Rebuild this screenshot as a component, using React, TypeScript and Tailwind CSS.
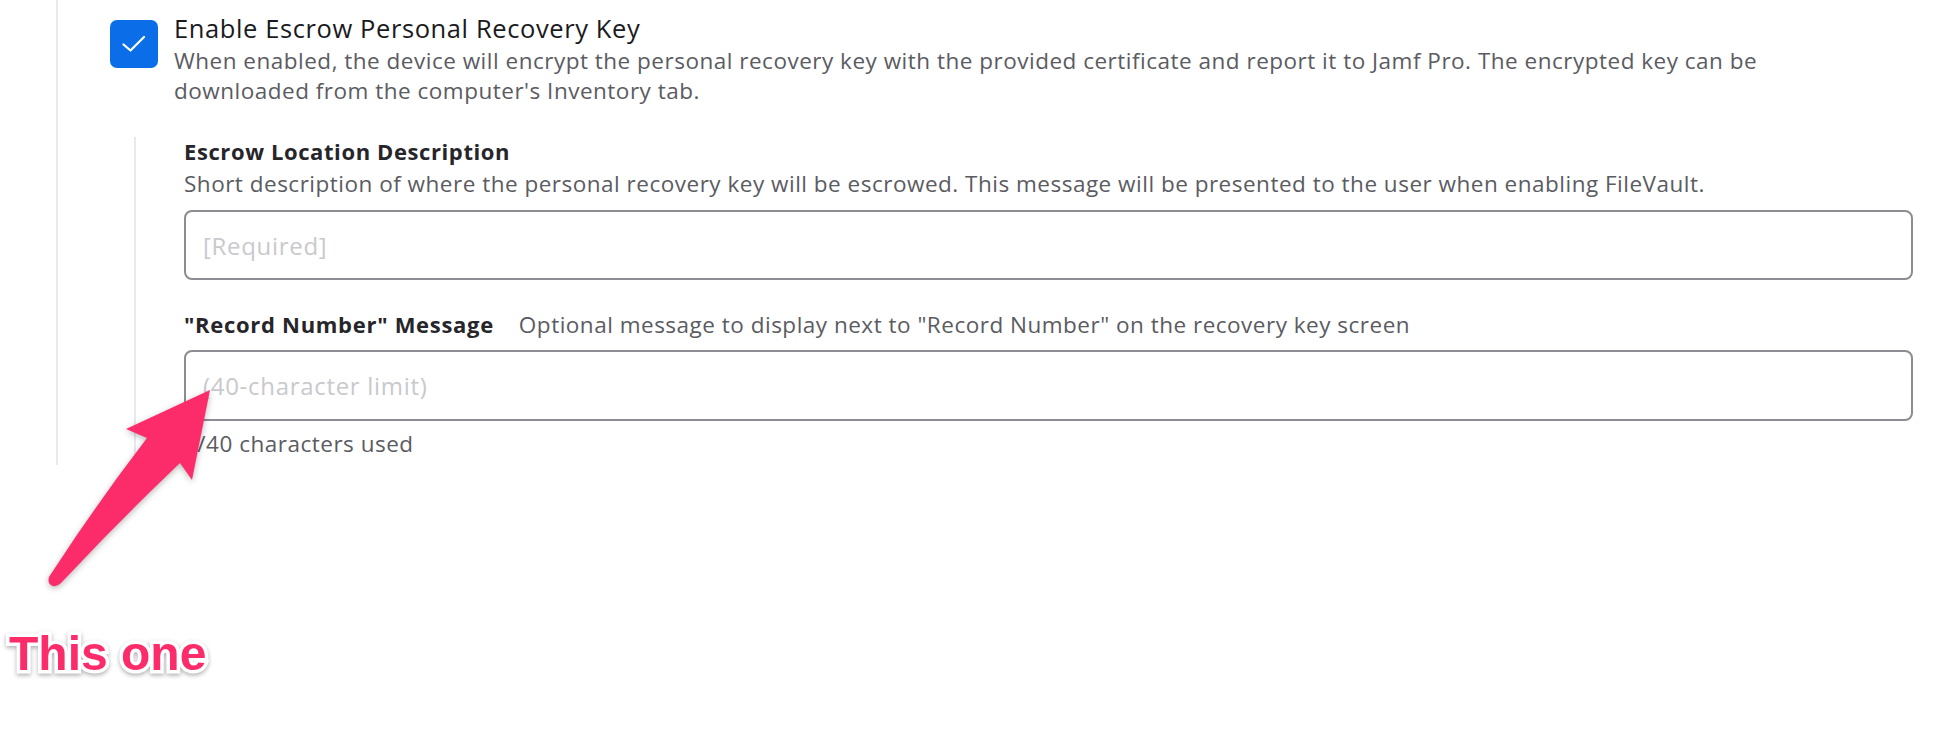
import React from 'react';

const font = { fontFamily: '"Open Sans", "Liberation Sans", sans-serif' };

const CheckBox: React.FC = () => (
  <div className="w-[48px] h-[48px] shrink-0 rounded-[7px] bg-[#0b6ee8] flex items-center justify-center">
    <svg width="24" height="18" viewBox="0 0 24 18" fill="none">
      <path d="M1.5 9.5 L8.5 15.5 L22 2" stroke="white" strokeWidth="2.2" strokeLinecap="round" strokeLinejoin="round" />
    </svg>
  </div>
);

const Annotation: React.FC = () => (
  <>
    <svg
      className="absolute left-0 top-0 pointer-events-none [filter:drop-shadow(0_2px_3px_rgba(0,0,0,0.28))]"
      width="1950"
      height="736"
      viewBox="0 0 1950 736"
    >
      <path
        d="M210 390 L126 429 L147 438 Q97 503 49 577 Q47 584 53 586 Q57 587 61 583 Q118 522 180 463 L192 480 Z"
        fill="#fc2c6b"
      />
    </svg>
    <div
      className="absolute left-[9px] top-[630px] text-[48px] leading-[48px] font-bold text-[#fc2c6b] [-webkit-text-stroke:7px_white] [paint-order:stroke_fill] [filter:drop-shadow(0_2px_2px_rgba(0,0,0,0.3))]"
      style={{ fontFamily: '"Liberation Sans", Arial, sans-serif' }}
    >
      This one
    </div>
  </>
);

export default function App() {
  return (
    <div className="relative w-[1950px] h-[736px] bg-white overflow-hidden" style={font}>
      <div className="ml-[56px] mr-[37px] border-l-2 border-[#e7e9ee] pb-[2px]">
        {/* Escrow checkbox */}
        <div className="flex pt-[20px] pl-[52px] gap-[16px]">
          <CheckBox />
          <div className="-mt-[7px]">
            <div className="text-[25.5px] leading-[30px] tracking-[0.6px] text-[#1a1a1e]">Enable Escrow Personal Recovery Key</div>
            <p className="mt-[3px] text-[22.5px] leading-[30px] tracking-[0.5px] text-[#5b5b62]">
              When enabled, the device will encrypt the personal recovery key with the provided certificate and report it to Jamf Pro. The encrypted key can be
              <br />
              downloaded from the computer's Inventory tab.
            </p>
          </div>
        </div>

        {/* Nested escrow options */}
        <div className="ml-[76px] mt-[31px] border-l-2 border-[#e7e9ee] pl-[48px] pb-[5px]">
          <div className="text-[22px] leading-[28px] tracking-[0.6px] font-bold text-[#26262a]">Escrow Location Description</div>
          <div className="mt-[5px] text-[22.5px] leading-[28px] tracking-[0.5px] text-[#5b5b62]">
            Short description of where the personal recovery key will be escrowed. This message will be presented to the user when enabling FileVault.
          </div>
          <input
            type="text"
            placeholder="[Required]"
            className="mt-[12px] block w-full h-[70px] rounded-[8px] border-2 border-[#8c8c93] bg-white px-[17px] text-[24px] tracking-[0.7px] text-[#1c1c20] placeholder:text-[#c9c9cd] outline-none"
          />

          <div className="mt-[30px] flex items-baseline gap-[25px] leading-[28px]">
            <span className="text-[22px] tracking-[0.7px] font-bold text-[#26262a]">"Record Number" Message</span>
            <span className="text-[22.5px] tracking-[0.5px] text-[#5b5b62]">Optional message to display next to "Record Number" on the recovery key screen</span>
          </div>
          <input
            type="text"
            placeholder="(40-character limit)"
            className="mt-[11px] block w-full h-[71px] rounded-[8px] border-2 border-[#8c8c93] bg-white px-[17px] text-[24px] tracking-[0.7px] text-[#1c1c20] placeholder:text-[#c9c9cd] outline-none"
          />
          <div className="mt-[9px] text-[22.5px] leading-[28px] tracking-[0.5px] text-[#5b5b62]">0/40 characters used</div>
        </div>
      </div>

      <Annotation />
    </div>
  );
}
